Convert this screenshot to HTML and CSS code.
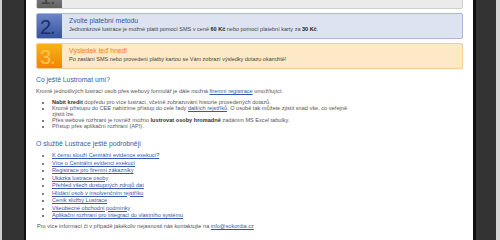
FILE: index.html
```html
<!DOCTYPE html>
<html lang="cs">
<head>
    <meta charset="UTF-8">
    <meta name="viewport" content="width=device-width, initial-scale=1.0">
    <title>Lustromat</title>
    <link rel="stylesheet" href="styles.css">
</head>
<body>
    <div class="frame">
        <div class="side side-left"></div>

        <div class="page">
            <!-- kroky objednávky -->
            <div class="steps">
                <div class="step step-1">
                    <div class="num">1.</div>
                    <div class="txt">
                        <h3>Zadejte údaje o osobě</h3>
                    </div>
                </div>
                <div class="step step-2">
                    <div class="num">2.</div>
                    <div class="txt">
                        <h3>Zvolte platební metodu</h3>
                        <p>Jednorázové lustrace je možné platit pomocí SMS v ceně <b>60 Kč</b> nebo pomocí platební karty za <b>30 Kč</b>.</p>
                    </div>
                </div>
                <div class="step step-3">
                    <div class="num">3.</div>
                    <div class="txt">
                        <h3>Výsledek teď hned!</h3>
                        <p>Po zaslání SMS nebo provedení platby kartou se Vám zobrazí výsledky dotazu okamžitě!</p>
                    </div>
                </div>
            </div>

            <div class="text">
                <h2>Co ještě Lustromat umí?</h2>
                <p class="intro">Kromě jednotlivých lustrací osob přes webový formulář je dále možná <a href="#">firemní registrace</a> umožňující:</p>
                <ul class="features">
                    <li><b>Nabít kredit</b> dopředu pro více lustrací, včetně zobrazování historie provedených dotazů.</li>
                    <li>Kromě přístupu do CEE nabízíme přístup do celé řady <a href="#">dalších rejstříků</a>. O osobě tak můžete zjistit snad vše, co veřejně zjistit lze.</li>
                    <li>Přes webové rozhraní je rovněž možno <b>lustrovat osoby hromadně</b> zadáním MS Excel tabulky.</li>
                    <li>Přístup přes aplikační rozhraní (API).</li>
                </ul>

                <h2>O službě Lustrace ještě podrobněji</h2>
                <ul class="links">
                    <li><a href="#">K čemu slouží Centrální evidence exekucí?</a></li>
                    <li><a href="#">Více o Centrální evidenci exekucí</a></li>
                    <li><a href="#">Registrace pro firemní zákazníky</a></li>
                    <li><a href="#">Ukázka lustrace osoby</a></li>
                    <li><a href="#">Přehled všech dostupných zdrojů dat</a></li>
                    <li><a href="#">Hlídání osob v insolvenčním rejstříku</a></li>
                    <li><a href="#">Ceník služby Lustrace</a></li>
                    <li><a href="#">Všeobecné obchodní podmínky</a></li>
                    <li><a href="#">Aplikační rozhraní pro integraci do vlastního systému</a></li>
                </ul>

                <p class="contact">Pro více informací či v případě jakékoliv nejasnosti nás kontaktujte na <a href="#">info@sokordia.cz</a></p>
            </div>
        </div>

        <div class="side side-right"></div>
    </div>
</body>
</html>
```

FILE: styles.css
```css
body {
    margin: 0;
    padding: 0;
    font-family: "Liberation Sans", Arial, sans-serif;
    background-color: #333;
}
.frame {
    display: flex;
    height: 240px;
    overflow: hidden;
}
.side {
    background-color: #333;
}
.side-left {
    width: 22px;
    border-left: 2px solid #cfcfcf;
    border-right: 2px solid #111;
}
.side-right {
    width: 20px;
    border-left: 3px solid #111;
    border-right: 4px solid #d6d6d6;
}
.page {
    width: 427px;
    padding: 0 10px;
    background-color: #fff;
}

/* kroky */
.steps {
    margin-top: -17px;
}
.step {
    display: flex;
    height: 26px;
    box-sizing: border-box;
    border: 1px solid #ccc;
    border-radius: 2px;
    margin-bottom: 4px;
    overflow: hidden;
}
.num {
    width: 26px;
    margin: -1px 0 -1px -1px;
    font-size: 20px;
    line-height: 28px;
    text-indent: 4px;
    letter-spacing: -1px;
}
.txt {
    padding: 3px 0 0 7px;
}
.txt h3 {
    margin: 0;
    font-size: 6.8px;
    line-height: 8px;
    font-weight: normal;
}
.txt p {
    margin: 1px 0 0;
    font-size: 5.5px;
    line-height: 7px;
    color: #444;
}
.txt b {
    color: #222;
}
.step-1 {
    background-color: #ebebeb;
    border-color: #d0d0d0;
}
.step-1 .num {
    background: linear-gradient(#a3a3a3, #5e5e5e);
    color: #454545;
}
.step-1 h3 {
    color: #555;
}
.step-2 {
    background-color: #dde3f1;
    border-color: #a9b7d9;
}
.step-2 .num {
    background: linear-gradient(#6f89c6, #34519c);
    color: #1c2d6b;
}
.step-2 h3 {
    color: #2d58aa;
}
.step-3 {
    background-color: #fee9c6;
    border-color: #f9cb8e;
}
.step-3 .num {
    background: linear-gradient(#fbb417, #ef8300);
    color: #fcc553;
}
.step-3 h3 {
    color: #f27a19;
}

/* texty */
.text {
    max-width: 316px;
    color: #555;
    font-size: 5.6px;
}
.text h2 {
    margin: 7px 0 4px;
    font-size: 6.8px;
    line-height: 8px;
    font-weight: normal;
    color: #2f5fb0;
}
.text a {
    color: #3657ae;
}
.text b {
    color: #333;
}
.intro {
    margin: 0 0 5px;
    line-height: 6px;
    white-space: nowrap;
}
ul {
    margin: 0;
    padding-left: 16px;
}
.features li {
    line-height: 6px;
}
.features + h2 {
    margin-top: 11px;
}
.links {
    margin-top: 2px;
}
.links li {
    line-height: 7.5px;
}
.contact {
    margin: 3px 0 0 1px;
    line-height: 7px;
    white-space: nowrap;
}
```
